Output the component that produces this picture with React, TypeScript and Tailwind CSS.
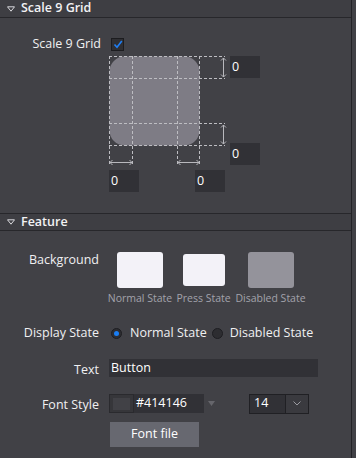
import React from "react";

const font = { fontFamily: '"Open Sans", "DejaVu Sans", sans-serif' };

function SectionHeader({ title, top }: { title: string; top?: boolean }) {
  return (
    <div
      className={[
        "flex h-[18px] items-center border-b border-[#27272b] bg-[#3e3e43] pl-[7px]",
        top ? "border-t" : "",
      ].join(" ")}
    >
      <svg width="8" height="6" viewBox="0 0 8 6" className="mr-[6px]">
        <path d="M0.5 0.8 L7.5 0.8 L4 5.2 Z" fill="none" stroke="#d8d8dc" strokeWidth="1" />
      </svg>
      <span className="text-[12.5px] font-semibold leading-none text-[#f2f2f4]">{title}</span>
    </div>
  );
}

function NumBox({ value, className }: { value: string; className: string }) {
  return (
    <div
      className={[
        "absolute flex h-[22px] w-[30px] items-center bg-[#313136] pl-[2px] text-[12.5px] font-medium text-white",
        className,
      ].join(" ")}
    >
      {value}
    </div>
  );
}

function GridDiagram() {
  const dash = { stroke: "#bdbdc2", strokeWidth: 1, strokeDasharray: "3 2", fill: "none" };
  const arrow = { stroke: "#b8b8bd", strokeWidth: 1, fill: "none" };
  return (
    <div className="relative h-[136px] w-[152px]">
      <svg width="152" height="136" className="absolute left-0 top-0">
        <rect x="0.5" y="0.5" width="90" height="89" rx="15" fill="#7e7c85" />
        {[0.5, 23.5, 68.5, 90.5].map((x) => (
          <line key={"v" + x} x1={x} y1="0" x2={x} y2="108" {...dash} />
        ))}
        {[0.5, 22.5, 67.5, 89.5].map((y) => (
          <line key={"h" + y} x1="0" y1={y} x2="116" y2={y} {...dash} />
        ))}
        {/* vertical arrows */}
        <line x1="114.5" y1="2" x2="114.5" y2="21" {...arrow} />
        <path d="M112 4.5 L114.5 2 L117 4.5 M112 18.5 L114.5 21 L117 18.5" {...arrow} />
        <line x1="114.5" y1="69" x2="114.5" y2="88" {...arrow} />
        <path d="M112 71.5 L114.5 69 L117 71.5 M112 85.5 L114.5 88 L117 85.5" {...arrow} />
        {/* horizontal arrows */}
        <line x1="1" y1="106.5" x2="23" y2="106.5" {...arrow} />
        <path d="M3.5 104 L1 106.5 L3.5 109 M20.5 104 L23 106.5 L20.5 109" {...arrow} />
        <line x1="69" y1="106.5" x2="90" y2="106.5" {...arrow} />
        <path d="M71.5 104 L69 106.5 L71.5 109 M87.5 104 L90 106.5 L87.5 109" {...arrow} />
      </svg>
      <NumBox value="0" className="left-[121px] top-0" />
      <NumBox value="0" className="left-[121px] top-[87px]" />
      <NumBox value="0" className="left-0 top-[114px]" />
      <NumBox value="0" className="left-[86px] top-[114px]" />
    </div>
  );
}

function Swatch({ w, h, color, label }: { w: string; h: string; color: string; label: string }) {
  return (
    <div className="flex flex-col items-center">
      <div className="flex h-[36px] items-center">
        <div className={[w, h, color, "rounded-[3px]"].join(" ")} />
      </div>
      <div className="mt-[4px] whitespace-nowrap text-[10.5px] font-normal leading-[13px] text-[#a3a3ac]">
        {label}
      </div>
    </div>
  );
}

function Radio({ checked }: { checked?: boolean }) {
  return (
    <span className="flex h-[11px] w-[11px] items-center justify-center rounded-full border border-[#1e1e22] bg-[#2d2d31]">
      {checked ? <span className="h-[5px] w-[5px] rounded-full bg-[#1a7df2]" /> : null}
    </span>
  );
}

export default function App() {
  return (
    <div
      className="flex h-[458px] w-[356px] overflow-hidden bg-[#414146] text-[12.5px] font-medium text-white"
      style={font}
    >
      <div className="flex w-[352px] flex-col border-r border-[#232327]">
        <SectionHeader title="Scale 9 Grid" />
        <div className="h-[195px]">
          <div className="mt-[19px] flex items-center">
            <div className="w-[101px] text-right leading-[14px] text-[#f0f0f2]">Scale 9 Grid</div>
            <div className="ml-[10px] flex h-[13px] w-[13px] items-center justify-center border border-[#1c1c1f] bg-[#2f2f33]">
              <svg width="10" height="9" viewBox="0 0 10 9">
                <path d="M1.5 4.5 L4 7.2 L8.8 1" fill="none" stroke="#1f7ff5" strokeWidth="1.6" />
              </svg>
            </div>
          </div>
          <div className="ml-[109px] mt-[5px]">
            <GridDiagram />
          </div>
        </div>

        <SectionHeader title="Feature" top />

        <div className="flex flex-col">
          <div className="mt-[21px] flex items-start">
            <div className="w-[99px] pt-[1px] text-right leading-[14px] text-[#f0f0f2]">Background</div>
            <div className="ml-[10px] flex gap-[6px]">
              <div className="w-[62px]">
                <Swatch w="w-[46px]" h="h-[36px]" color="bg-[#f3f2f8]" label="Normal State" />
              </div>
              <div className="w-[53px]">
                <Swatch w="w-[42px]" h="h-[32px]" color="bg-[#f3f2f8]" label="Press State" />
              </div>
              <div className="w-[69px]">
                <Swatch w="w-[46px]" h="h-[36px]" color="bg-[#94939b]" label="Disabled State" />
              </div>
            </div>
          </div>

          <div className="mt-[20px] flex h-[16px] items-center text-[#f0f0f2]">
            <div className="w-[99px] text-right">Display State</div>
            <div className="ml-[12px] flex items-center">
              <Radio checked />
              <span className="ml-[8px]">Normal State</span>
              <span className="ml-[5px]">
                <Radio />
              </span>
              <span className="ml-[7px]">Disabled State</span>
            </div>
          </div>

          <div className="mt-[16px] flex items-center text-[#f0f0f2]">
            <div className="w-[99px] pt-[4px] text-right">Text</div>
            <div className="ml-[10px] flex h-[18px] w-[209px] items-center bg-[#313136] pl-[2px] text-white">
              Button
            </div>
          </div>

          <div className="mt-[13px] flex items-center text-[#f0f0f2]">
            <div className="w-[99px] pt-[3px] text-right">Font Style</div>
            <div className="ml-[10px] flex h-[19px] items-center">
              <div className="flex h-[19px] w-[25px] items-center justify-center border border-[#2a2a2e] bg-[#36363a]">
                <div className="h-[12px] w-[17px] bg-[#414146]" />
              </div>
              <div className="flex h-[19px] w-[70px] items-center bg-[#313136] pl-[2px] text-white">#414146</div>
              <svg width="7" height="5" viewBox="0 0 7 5" className="ml-[4px]">
                <path d="M0 0 L7 0 L3.5 5 Z" fill="#66666c" />
              </svg>
              <div className="ml-[34px] flex h-[20px] border border-[#202024]">
                <div className="flex w-[35px] items-center bg-[#313136] pl-[4px] text-white">14</div>
                <div className="flex w-[23px] items-center justify-center border-l border-[#202024] bg-[#3a3a3f]">
                  <svg width="8" height="5" viewBox="0 0 8 5">
                    <path d="M0.5 0.5 L4 4 L7.5 0.5" fill="none" stroke="#9a9aa0" strokeWidth="1" />
                  </svg>
                </div>
              </div>
            </div>
          </div>

          <div className="ml-[110px] mt-[7px] flex h-[25px] w-[89px] items-center justify-center bg-[#676870] text-white">
            Font file
          </div>
        </div>
      </div>
    </div>
  );
}
